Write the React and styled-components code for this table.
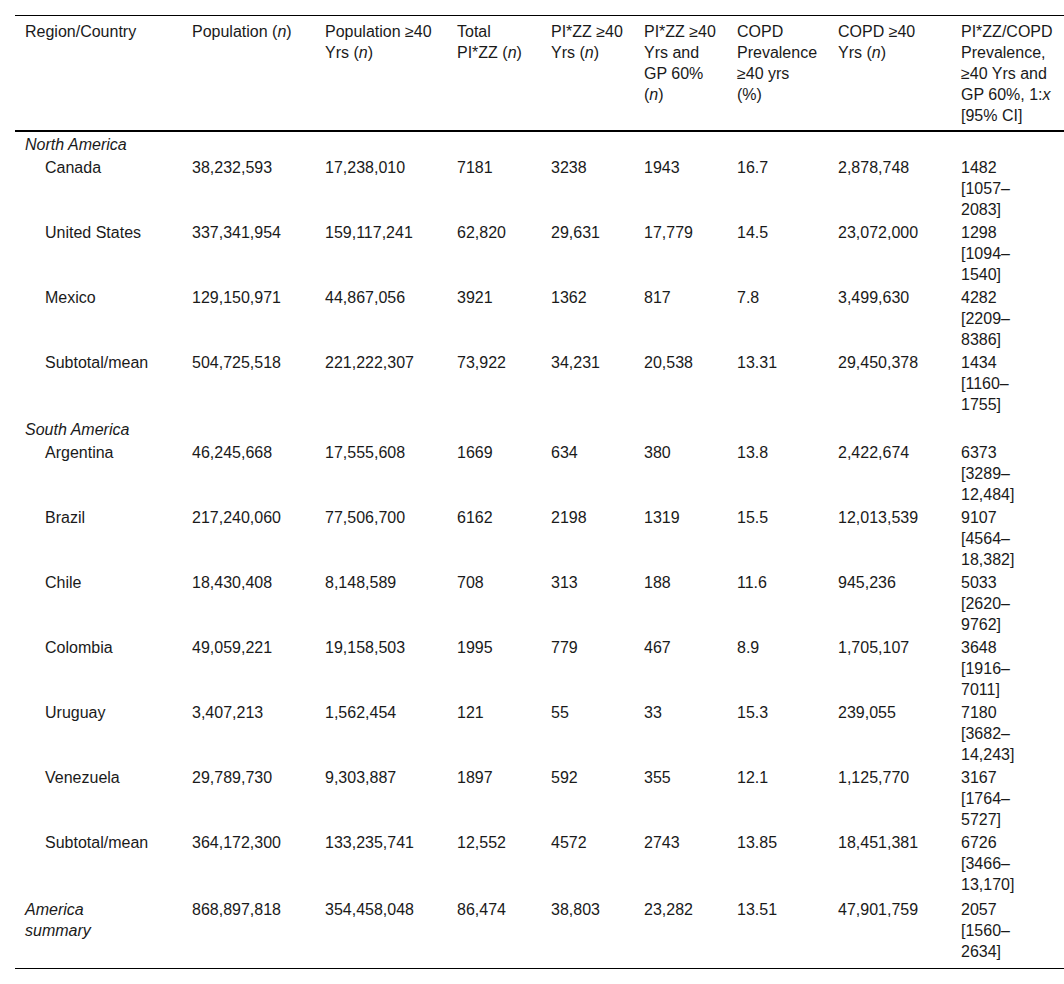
import React from 'react';
import styled, { createGlobalStyle } from 'styled-components';

const GlobalStyle = createGlobalStyle`
  html, body {
    margin: 0;
    padding: 0;
    background: #fff;
  }
  body {
    font-family: "Liberation Sans", Arial, sans-serif;
    color: #1a1a1a;
  }
`;

const columns = [167, 133, 132, 94, 93, 93, 101, 123, 113];

const headers = [
  ['Region/Country'],
  [<>Population (<i>n</i>)</>],
  ['Population ≥40', <>Yrs (<i>n</i>)</>],
  ['Total', <>PI*ZZ (<i>n</i>)</>],
  ['PI*ZZ ≥40', <>Yrs (<i>n</i>)</>],
  ['PI*ZZ ≥40', 'Yrs and', 'GP 60%', <>(<i>n</i>)</>],
  ['COPD', 'Prevalence', '≥40 yrs', '(%)'],
  ['COPD ≥40', <>Yrs (<i>n</i>)</>],
  ['PI*ZZ/COPD', 'Prevalence,', '≥40 Yrs and', <>GP 60%, 1:<i>x</i></>, '[95% CI]'],
];

const groups = [
  {
    name: 'North America',
    rows: [
      ['Canada', '38,232,593', '17,238,010', '7181', '3238', '1943', '16.7', '2,878,748', ['1482', '1057', '2083']],
      ['United States', '337,341,954', '159,117,241', '62,820', '29,631', '17,779', '14.5', '23,072,000', ['1298', '1094', '1540']],
      ['Mexico', '129,150,971', '44,867,056', '3921', '1362', '817', '7.8', '3,499,630', ['4282', '2209', '8386']],
      ['Subtotal/mean', '504,725,518', '221,222,307', '73,922', '34,231', '20,538', '13.31', '29,450,378', ['1434', '1160', '1755']],
    ],
  },
  {
    name: 'South America',
    rows: [
      ['Argentina', '46,245,668', '17,555,608', '1669', '634', '380', '13.8', '2,422,674', ['6373', '3289', '12,484']],
      ['Brazil', '217,240,060', '77,506,700', '6162', '2198', '1319', '15.5', '12,013,539', ['9107', '4564', '18,382']],
      ['Chile', '18,430,408', '8,148,589', '708', '313', '188', '11.6', '945,236', ['5033', '2620', '9762']],
      ['Colombia', '49,059,221', '19,158,503', '1995', '779', '467', '8.9', '1,705,107', ['3648', '1916', '7011']],
      ['Uruguay', '3,407,213', '1,562,454', '121', '55', '33', '15.3', '239,055', ['7180', '3682', '14,243']],
      ['Venezuela', '29,789,730', '9,303,887', '1897', '592', '355', '12.1', '1,125,770', ['3167', '1764', '5727']],
      ['Subtotal/mean', '364,172,300', '133,235,741', '12,552', '4572', '2743', '13.85', '18,451,381', ['6726', '3466', '13,170']],
    ],
  },
];

const summary = ['868,897,818', '354,458,048', '86,474', '38,803', '23,282', '13.51', '47,901,759', ['2057', '1560', '2634']];

export default function App() {
  return (
    <>
      <GlobalStyle />
      <Page>
        <Table>
          <colgroup>
            {columns.map((w, i) => (
              <col key={i} style={{ width: w }} />
            ))}
          </colgroup>
          <thead>
            <tr>
              {headers.map((lines, i) => (
                <HeadCell key={i}>
                  {lines.map((l, j) => (
                    <Line key={j}>{l}</Line>
                  ))}
                </HeadCell>
              ))}
            </tr>
          </thead>
          <tbody>
            {groups.map((g, gi) => (
              <React.Fragment key={g.name}>
                <tr>
                  <GroupCell colSpan={9} $first={gi === 0}>{g.name}</GroupCell>
                </tr>
                {g.rows.map((r) => (
                  <tr key={r[0]}>
                    <Cell $indent>{r[0]}</Cell>
                    {r.slice(1, 8).map((v, vi) => (
                      <Cell key={vi}>{v}</Cell>
                    ))}
                    <Cell>
                      <Ci value={r[8]} />
                    </Cell>
                  </tr>
                ))}
              </React.Fragment>
            ))}
            <SummaryRow>
              <Cell $last>
                <i>America</i>
                <Line><i>summary</i></Line>
              </Cell>
              {summary.slice(0, 7).map((v, vi) => (
                <Cell key={vi} $last>{v}</Cell>
              ))}
              <Cell $last>
                <Ci value={summary[7]} />
              </Cell>
            </SummaryRow>
          </tbody>
        </Table>
      </Page>
    </>
  );
}

function Ci({ value }) {
  const [v, lo, hi] = value;
  return (
    <>
      <Line>{v}</Line>
      <Line>[{lo}–</Line>
      <Line>{hi}]</Line>
    </>
  );
}

const Page = styled.div`
  padding: 15px 0 0 15px;
  width: 1049px;
`;

const Table = styled.table`
  width: 1049px;
  table-layout: fixed;
  border-collapse: collapse;
  font-size: 16px;
  line-height: 21px;
`;

const Line = styled.span`
  display: block;
  white-space: nowrap;
`;

const HeadCell = styled.th`
  text-align: left;
  font-weight: normal;
  vertical-align: top;
  padding: 5px 10px 4px 10px;
  border-top: 1px solid #000;
  border-bottom: 2px solid #000;

  i {
    font-style: italic;
  }
`;

const GroupCell = styled.td`
  font-style: italic;
  padding: ${(p) => (p.$first ? '2px' : '3px')} 10px 1px 10px;
`;

const Cell = styled.td`
  vertical-align: top;
  white-space: nowrap;
  padding: 1px 10px ${(p) => (p.$last ? '6px' : '1px')}
    ${(p) => (p.$indent ? '30px' : '10px')};
`;

const SummaryRow = styled.tr`
  border-bottom: 1px solid #000;

  td {
    padding-top: 3px;
  }
`;
